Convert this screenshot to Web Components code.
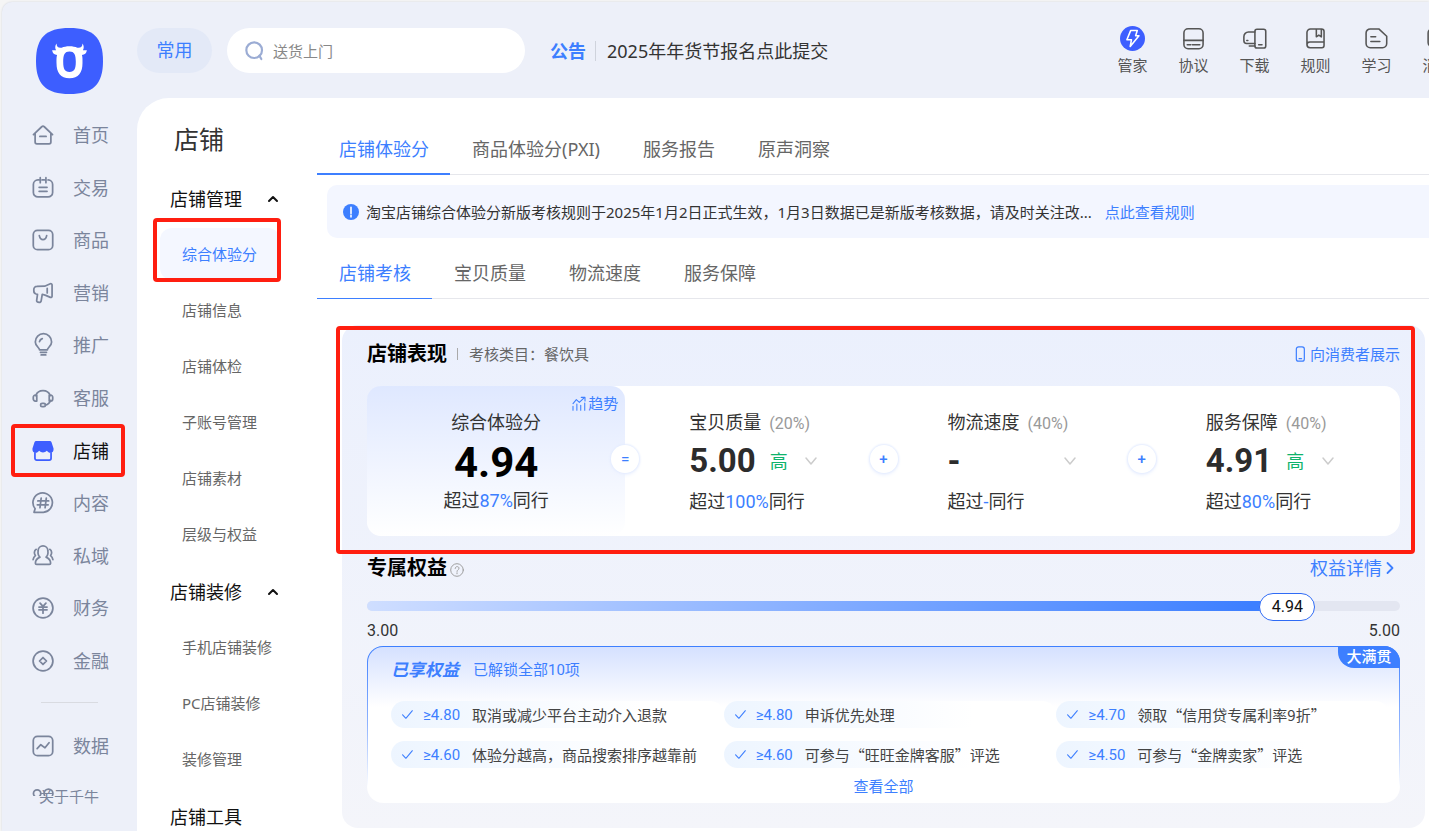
<!DOCTYPE html>
<html lang="zh-CN">
<head>
<meta charset="utf-8">
<meta name="viewport" content="width=device-width, initial-scale=1">
<title>店铺体验分</title>
<style>
  html, body { margin: 0; height: 100%; }
  body {
    --blue: #3d7fff;
    --brand: #3d5eff;
    --red: #ff1e10;
    --num: Roboto, "Noto Sans CJK SC", sans-serif;
    font: 15px/20px "Noto Sans", "Noto Sans CJK SC", sans-serif;
    color: #333;
    background: #f5f5f5;
    overflow: hidden;
  }
</style>
</head>
<body>
<app-shell>
  <side-nav slot="side"></side-nav>
  <top-bar slot="top"></top-bar>
  <sub-nav slot="sub"></sub-nav>
  <tab-bar size="large">
    <a href="#score" class="active">店铺体验分</a>
    <a href="#pxi">商品体验分(PXI)</a>
    <a href="#report">服务报告</a>
    <a href="#voice">原声洞察</a>
  </tab-bar>
  <notice-bar>淘宝店铺综合体验分新版考核规则于2025年1月2日正式生效，1月3日数据已是新版考核数据，请及时关注改...<a slot="link" href="#rules">点此查看规则</a></notice-bar>
  <tab-bar>
    <a href="#check" class="active">店铺考核</a>
    <a href="#quality">宝贝质量</a>
    <a href="#logistics">物流速度</a>
    <a href="#service">服务保障</a>
  </tab-bar>
  <score-panel></score-panel>
</app-shell>

<script>
const define = (name, css, html) => {
  const tpl = document.createElement('template');
  tpl.innerHTML = `<style>*{box-sizing:border-box}a{color:inherit;text-decoration:none}button{font:inherit;color:inherit;background:none;border:0;padding:0;cursor:pointer}h1,h2,h3,p,ul{margin:0;padding:0;font-weight:inherit;font-size:inherit}ul{list-style:none}${css}</style>${html}`;
  customElements.define(name, class extends HTMLElement {
    constructor() {
      super();
      this.attachShadow({ mode: 'open' }).append(tpl.content.cloneNode(true));
    }
  });
};

/* ---------- icons, all on a 24 unit grid ---------- */
const ICONS = {
  home: '<path d="M1.6 11.6 10.6 3Q12 1.8 13.4 3l9 8.6M3.4 10.4v9.2a2 2 0 0 0 2 2h13.2a2 2 0 0 0 2-2v-9.2M8.6 13.6h6.8"/>',
  trade: '<path d="M7.500 3.200H6.500a5 5 0 0 0-5 5v8.600a5 5 0 0 0 5 5h11a5 5 0 0 0 5-5V8.200a5 5 0 0 0-5-5M11 3.200h2.500M9 .8v5.400M15.200.8v5.400M7.800 11.300h8.600M7.800 15.600h8.600"/>',
  goods: '<rect x="1.400" y="1.400" width="21.200" height="21.200" rx="4.600"/><path d="M8 7.200c.6 3.200 2.200 4.400 4 4.400s3.400-1.200 4-4.400"/>',
  horn: '<path d="M13.800 4.600 20 1.900a1.400 1.400 0 0 1 1.900 1.300v12.300a1.400 1.400 0 0 1-1.900 1.300l-5-2.200-3.800-1.200-1.200 7.200a1.900 1.900 0 0 1-2.200 1.600l-1.200-.2a1.700 1.700 0 0 1-1.500-2l.9-6.600-1.500-.3A3.200 3.200 0 0 1 2 9.900V8a3.200 3.200 0 0 1 3.200-3.200ZM16.600 7v5"/>',
  bulb: '<path d="M8.200 17.200c0-2.200-4.600-4-4.600-8.600a8.900 8.900 0 0 1 17.800 0c0 4.600-4.600 6.400-4.600 8.600ZM9.200 20h6.600M10 22.800h5M8.200 8.300a4.600 4.600 0 0 1 3-3.300"/>',
  headset: '<path d="M4 9.500a8.600 8.600 0 0 1 16 0M20.200 14.500c-.8 3-2.600 4.600-5.600 5.300M4 8.900H3.600a2.200 2.200 0 0 0-2.200 2.200v2a2.200 2.200 0 0 0 2.200 2.200H5.200V8.900ZM20 8.900h.4a2.200 2.200 0 0 1 2.200 2.200v2a2.200 2.200 0 0 1-2.200 2.200h-1.600V8.900Z"/><rect x="9.400" y="17.800" width="5.200" height="3.600" rx="1.600"/>',
  shop: '<path d="M3.200 14v6a2 2 0 0 0 2 2h13.600a2 2 0 0 0 2-2v-6"/><path d="M4.600 1h14.800a2 2 0 0 1 1.900 1.400l2.200 6.800c.4 3-1.200 4.800-3.300 4.800-1.700 0-2.800-.8-4.100-2.200-1.200 1.200-2.500 1.800-4.100 1.800s-2.900-.6-4.100-1.800C6.600 13.200 5.500 14 3.800 14 1.700 14 .1 12.200.5 9.200l2.200-6.800A2 2 0 0 1 4.600 1Z" fill="currentColor" stroke="none"/>',
  hash: '<path d="M2.200 22.200l1.200-3.900A10.600 10.600 0 1 1 12.400 22.200ZM10 6.600 8.700 17.200M15.600 6.600l-1.300 10.600M6.400 9.800h11.800M5.800 14h11.800"/>',
  people: '<path d="M8.700 13.200C6.500 11.600 6.300 9 6.700 6.200a5.300 5.300 0 0 1 10.600 0c.4 2.800.2 5.400-2 7 3.400 1.400 5 3.600 5 6.600a1.400 1.400 0 0 1-1.400 1.400H5.100a1.400 1.400 0 0 1-1.400-1.400c0-3 1.600-5.200 5-6.600ZM4.600 4.700C2 6 2.200 9.800 3.700 11.600 2.300 12.600 1.500 14 1.200 16M19.400 4.700C22 6 21.800 9.800 20.300 11.600c1.400 1 2.200 2.400 2.500 4.400"/>',
  yen: '<circle cx="12" cy="12" r="10.800"/><path d="M8.800 6.600 12 10.200l3.200-3.600M12 10.200v7.400M7.600 11h8.800M7.600 14h8.800"/>',
  finance: '<circle cx="12" cy="12" r="10.800"/><path d="m12 8.200 3.800 3.800-3.800 3.800L8.200 12Z"/>',
  chart: '<rect x="1.400" y="1.400" width="21.200" height="21.200" rx="4.600"/><path d="m5.600 14.800 4-4.200 4.600 3.400 4.400-5.600"/>',
  apps: '<circle cx="5.600" cy="6" r="4"/><circle cx="18" cy="6" r="4.800"/><circle cx="6" cy="18" r="4.200"/><circle cx="18" cy="18" r="4.200"/>',
  search: '<circle cx="11" cy="11" r="9.400"/><path d="m17.200 17.600 2.400 4"/>',
  bolt: '<circle cx="12" cy="12" r="12" fill="#3d5eff" stroke="none"/><path stroke="#fff" d="M10.200 4.400h6.400l-1.600 5h3.200L9.800 19.600l1.200-6.400H6.600Z"/>',
  agreement: '<rect x="2.800" y="2.600" width="18.400" height="19.200" rx="4"/><path d="M2.800 13.800h18.400M6 18h3.400M11 18h7"/>',
  download: '<rect x="12.400" y="3.200" width="10.400" height="18" rx="2"/><path d="M12.400 5.800H6.200A4.400 4.400 0 0 0 1.800 10.200v4a2.600 2.600 0 0 0 2.600 2.600h8M7 19.200h5.400M16 18h3.200M4.600 14h1"/>',
  rules: '<path d="M20.200 15.400V5.200a2.400 2.400 0 0 0-2.400-2.400H7.200a3.400 3.400 0 0 0-3.400 3.400v11.600a3 3 0 0 0 3 3h11.400a2 2 0 0 0 2-2v-3.400H6.600a2.800 2.800 0 0 0-2.800 2.600M12.800 3v7.400l2.400-1.600 2.400 1.600V3"/>',
  study: '<path d="M6 2.800h8.200L21.800 9.800v7a4 4 0 0 1-4 4H6a4 4 0 0 1-4-4v-10a4 4 0 0 1 4-4ZM6.600 10.400h4.600M6.600 14.800h8.600"/>',
  message: '<rect x="3" y="2.800" width="19" height="17" rx="4"/><path d="M7 11h10"/>',
  phone: '<rect x="6.500" y="1.200" width="12" height="21.600" rx="3.400"/><path d="M10.600 19h3.800"/>',
  trend: '<path d="M3 13l5-6 4.500 4L20 4M15.400 3.600H21v5.400M3 17v6M8.800 13.500V23M14.600 15.500V23M20.600 12V23"/>',
  help: '<circle cx="12" cy="12" r="10.800"/><path d="M8.800 9.400c0-4.400 6.600-4.200 6.600-.4 0 2.600-3.400 2.600-3.400 5.400M12 16.800v1.600"/>',
  info: '<circle cx="12" cy="12" r="12" fill="#3d7fff" stroke="none"/><path stroke="#fff" stroke-width="2.400" d="M12 5v9.400M12 17v2.400"/>',
  check: '<path d="m3 12.500 6 6.500L21 5"/>',
  up: '<path d="m4 16 8-8 8 8"/>',
  down: '<path d="m2 6 10 12L22 6"/>',
  right: '<path d="m7 2 10 10L7 22"/>'
};
customElements.define('ui-icon', class extends HTMLElement {
  connectedCallback() {
    if (this.shadowRoot) return;
    const w = this.getAttribute('weight') || '1.6';
    this.attachShadow({ mode: 'open' }).innerHTML =
      `<style>:host{display:block;flex:none;width:22px;height:22px}svg{display:block;width:100%;height:100%;overflow:visible}</style>
       <svg viewBox="0 0 24 24" fill="none" stroke="currentColor" stroke-width="${w}" stroke-linecap="round" stroke-linejoin="round" aria-hidden="true">${ICONS[this.getAttribute('name')]}</svg>`;
  }
});

/* outline drawn round a region to call attention to it */
define('mark-frame', `
  :host{position:absolute;border:4px solid var(--red);border-radius:4px;pointer-events:none;z-index:5;box-sizing:border-box}
`, '');

define('app-shell', `
  :host{display:block;height:100vh;padding:2px 0 0 2px;box-sizing:border-box;overflow:hidden}
  .frame{display:grid;grid-template:96px minmax(0,1fr)/135px minmax(0,1fr);height:100%;background:#edf0f9;border-radius:10px 0 0 0;box-shadow:0 0 2px #cfd2da}
  .side{grid-row:1/3;min-height:0}
  main{display:grid;grid-template-columns:180px minmax(0,1fr);background:#fff;border-radius:32px 0 0 0;overflow:hidden}
  .content{min-width:0;padding-top:28px}
`, `
  <div class="frame">
    <div class="side"><slot name="side"></slot></div>
    <slot name="top"></slot>
    <main><slot name="sub"></slot><div class="content"><slot></slot></div></main>
  </div>`);

const navItem = (icon, label, extra = '', mark = '') =>
  `<li ${extra}><a href="#${icon}"><ui-icon name="${icon}" weight="1.9"></ui-icon>${label}</a>${mark}</li>`;

define('side-nav', `
  :host{display:flex;flex-direction:column;height:100%}
  .logo{flex:none;width:67px;height:66px;margin:26px 0 15px 34px}
  .logo svg{display:block;width:100%;height:100%}
  nav{flex:1;min-height:0;overflow:hidden}
  ul{display:grid;grid-auto-rows:1fr}
  .primary{height:578px}
  .extra{height:106px}
  hr{width:57px;height:1px;margin:15px 0 16px 39px;border:0;background:#d9dbe1}
  li{position:relative;display:flex;color:#7b859c}
  li.active{color:#111}
  li.active ui-icon{color:var(--brand)}
  li a{display:flex;flex:1;align-items:center;gap:19px;padding-left:30px;font-size:18px;line-height:24px}
  mark-frame{inset:0 12px 0 9px}
  footer{display:flex;height:41px;margin-top:-6px;padding-left:37px;position:relative;color:#7b859c}
  footer a{display:flex;align-items:flex-end;height:15px;overflow:hidden;line-height:18px}
`, `
  <a class="logo" href="#home" aria-label="千牛"><svg viewBox="0 0 67 66">
    <path fill="#3d5eff" d="M33.500 0C57 0 67 9.500 67 33S57 66 33.500 66 0 56.500 0 33 10 0 33.500 0Z"/>
    <path fill="#fff" fill-rule="evenodd" d="M20.500 15.500c.2 3 1.300 4.200 4 4.200h1.200c2-1 4.600-1.500 7.800-1.500s5.800.5 7.800 1.500h1.200c2.700 0 3.800-1.200 4-4.200 1.600 2.300 1.600 4.700.4 6.800h4c-.5 3-2.200 4.600-5 4.600.8 2.300.6 5 .6 8.100 0 9.800-4 15.200-13 15.200S20.500 44.800 20.500 35c0-3.100-.2-5.800.6-8.100-2.800 0-4.500-1.600-5-4.600h4c-1.200-2.100-1.200-4.500.4-6.800ZM33.500 23.400c-4.900 0-6.300 3.200-6.300 10.400 0 6.800 1.400 10.200 6.300 10.200s6.300-3.400 6.300-10.200c0-7.200-1.400-10.400-6.300-10.400Z"/>
  </svg></a>
  <nav aria-label="主导航">
    <ul class="primary">
      ${navItem('home', '首页')}${navItem('trade', '交易')}${navItem('goods', '商品')}${navItem('horn', '营销')}
      ${navItem('bulb', '推广')}${navItem('headset', '客服')}
      ${navItem('shop', '店铺', 'class="active"', '<mark-frame></mark-frame>')}
      ${navItem('hash', '内容')}${navItem('people', '私域')}${navItem('yen', '财务')}${navItem('finance', '金融')}
    </ul>
    <hr>
    <ul class="extra">${navItem('chart', '数据')}${navItem('apps', '')}</ul>
  </nav>
  <footer><a href="#about">关于千牛</a></footer>`);

define('tool-link', `
  :host{display:block;flex:none;width:61px}
  a{display:flex;flex-direction:column;align-items:center;gap:4px;line-height:20px;color:#555}
  ::slotted(ui-icon){width:25px;height:25px}
`, `<a href="#"><slot name="icon"></slot><span><slot></slot></span></a>`);

const tool = (icon, label) => `<tool-link><ui-icon slot="icon" name="${icon}" weight="1.500"></ui-icon>${label}</tool-link>`;
define('top-bar', `
  :host{display:flex;align-items:flex-start;padding-top:24px;min-width:0;overflow:hidden}
  .pill{flex:none;width:75px;height:45px;margin-top:2px;padding-bottom:2px;border-radius:23px;background:#e3e9f7;color:var(--blue);font-size:18px}
  .search{display:flex;align-items:center;gap:8px;flex:none;width:298px;height:45px;margin:2px 0 0 15px;padding:0 18px;border-radius:23px;background:#fff;color:#9bacd4}
  .search ui-icon{width:20px;height:20px}
  input{flex:1;min-width:0;border:0;outline:0;background:none;font:inherit;color:#333;padding:0}
  input::placeholder{color:#888;opacity:1}
  .news{display:flex;align-items:center;flex:1;min-width:0;height:45px;margin:2px 0 0 25px;font-size:18px;white-space:nowrap}
  .news b{color:var(--blue);padding-right:9px}
  .news a{border-left:1px solid #cfd3dc;padding-left:11px}
  .tools{display:flex;margin-right:-39px}
`, `
  <button class="pill">常用</button>
  <label class="search"><ui-icon name="search" weight="2.600"></ui-icon><input type="text" placeholder="送货上门" aria-label="搜索"></label>
  <div class="news"><b>公告</b><a href="#news">2025年年货节报名点此提交</a></div>
  <div class="tools">${tool('bolt', '管家')}${tool('agreement', '协议')}${tool('download', '下载')}${tool('rules', '规则')}${tool('study', '学习')}${tool('message', '消息')}</div>`);

define('nav-group', `
  :host{display:block;margin-bottom:3px}
  button{display:flex;align-items:center;gap:25px;height:54px;padding-left:33px;font-size:18px;color:#111}
  ui-icon{width:12px;height:12px}
  :host([plain]) ui-icon{display:none}
`, `<button aria-expanded="true"><slot name="title"></slot><ui-icon name="up" weight="4"></ui-icon></button><slot></slot>`);

define('sub-nav', `
  :host{display:block;padding-top:24px}
  h1{font-size:25px;line-height:34px;padding-left:37px;margin-bottom:16px}
  a{display:flex;align-items:center;height:56px;padding-left:45px;color:#666}
  a.active{position:relative;height:52px;margin:2px 37px 2px 23px;padding-left:22px;border-radius:12px;background:#f4f7ff;color:var(--blue)}
  mark-frame{inset:-10px -1px -2px -7px}
`, `
  <h1>店铺</h1>
  <nav aria-label="店铺">
    <nav-group><span slot="title">店铺管理</span>
      <a class="active" href="#a">综合体验分<mark-frame></mark-frame></a><a href="#b">店铺信息</a><a href="#c">店铺体检</a><a href="#d">子账号管理</a><a href="#e">店铺素材</a><a href="#f">层级与权益</a></nav-group>
    <nav-group><span slot="title">店铺装修</span>
      <a href="#g">手机店铺装修</a><a href="#h">PC店铺装修</a><a href="#i">装修管理</a></nav-group>
    <nav-group plain><span slot="title">店铺工具</span></nav-group>
  </nav>`);

define('tab-bar', `
  :host{display:block}
  nav{display:flex;border-bottom:1px solid #e6e7ec}
  ::slotted(a){position:relative;padding:11px 21px 12px 22px;margin-bottom:-1px;border-bottom:1px solid transparent;font-size:18px;line-height:25px;color:#666;text-decoration:none;white-space:nowrap}
  :host([size=large]) ::slotted(a){padding-bottom:11px;border-bottom-width:2px}
  ::slotted(a.active){color:var(--blue);border-bottom-color:var(--blue)}
`, `<nav><slot></slot></nav>`);

define('notice-bar', `
  :host{display:flex;align-items:center;height:53px;margin:10px 0 12px 10px;padding-left:16px;background:#f3f6ff;border-radius:10px 0 0 10px;white-space:nowrap;overflow:hidden;box-sizing:border-box}
  ui-icon{width:16px;height:16px;margin-right:7px}
  ::slotted(a){margin-left:13px;color:var(--blue);text-decoration:none}
`, `<ui-icon name="info"></ui-icon><span><slot></slot></span><slot name="link"></slot>`);

define('score-cell', `
  :host{display:flex;flex-direction:column;position:relative;padding:24px 0 0 64px;font-size:18px;line-height:25px;white-space:nowrap}
  .weight{margin-left:8px;font:16px/25px var(--num);color:#999}
  .value{display:flex;align-items:center;width:128px;height:40px;margin:5px 0 8px;font-size:18px;color:#0fb36c}
  .num{font:bold 33px/40px var(--num);color:#2c2c2c;margin-right:14px}
  .value ui-icon{width:12px;height:12px;margin-left:auto;color:#ccc}
  .op{position:absolute;left:-14px;top:59px;width:28px;height:28px;border-radius:50%;background:#fff;box-shadow:0 0 2px 1px #e4ecff,0 2px 4px #edf2ff;color:var(--blue);font:500 15px/28px var(--num);text-align:center}
  .beat{font-family:var(--num)}
  :host([total]){align-items:center;padding-left:0;border-radius:14px;background:linear-gradient(#dfe8ff,#fff)}
  :host([total]) .value{width:auto;margin:8px 0 5px}
  :host([total]) .num{font-size:42px;color:#000;margin:0}
  :host([total]) :is(.op,.value ui-icon,.weight){display:none}
`, `
  <div><slot name="title"></slot><span class="weight"><slot name="weight"></slot></span></div>
  <div class="value"><span class="num"><slot name="num"></slot></span><slot name="level"></slot><ui-icon name="down" weight="3"></ui-icon></div>
  <div class="beat"><slot></slot></div>
  <span class="op"><slot name="op"></slot></span>
  <slot name="corner"></slot>`);

define('benefit-item', `
  :host{display:flex;align-items:center;height:27px;padding-left:10px;border-radius:14px;background:linear-gradient(90deg,#edf5ff,#fff 75%);font-family:"Noto Sans CJK SC",sans-serif;color:#444;white-space:nowrap}
  ui-icon{width:13px;height:13px;color:var(--blue)}
  .min{width:49px;margin-left:9px;font-family:var(--num);color:var(--blue)}
`, `<ui-icon name="check" weight="2"></ui-icon><span class="min"><slot name="min"></slot></span><slot></slot>`);

const benefit = (min, text) => `<benefit-item role="listitem"><span slot="min">≥${min}</span>${text}</benefit-item>`;
const cell = (op, title, weight, num, level, beat) => `
  <score-cell><span slot="title">${title}</span><span slot="weight">(${weight})</span><span slot="num">${num}</span><span slot="level">${level}</span>超过<em>${beat}</em>同行<span slot="op">${op}</span></score-cell>`;

define('score-panel', `
  :host{display:block;position:relative;margin:26px 4px 0 25px;padding:16px 25px 25px;border-radius:16px;background:linear-gradient(#ebf0fd,#f4f5fa)}
  .frame{inset:1px 10px auto -6px;height:228px}
  em{font-style:normal;color:var(--blue)}
  header{display:flex;align-items:center;height:26px}
  h2{font-size:20px;line-height:26px;font-weight:bold;color:#000}
  .cat{margin-left:10px;color:#666;display:flex;align-items:center}
  .cat::before{content:"";width:1px;height:12px;margin-right:11px;background:#aaa}
  header a{display:flex;align-items:center;margin-left:auto;color:var(--blue)}
  header a.show ui-icon{width:16px;height:16px;margin-right:2px}
  .scores{display:grid;grid-template-columns:repeat(4,minmax(0,1fr));height:150px;margin:19px 0;border-radius:16px;background:#fff}
  .trend{position:absolute;right:7px;top:7px;display:flex;align-items:center;font-size:15px;line-height:20px;color:var(--blue)}
  .trend ui-icon{width:16px;height:16px;margin-right:1px}
  .help{width:14px;height:14px;margin:4px 0 0 3px;color:#999}
  header a.detail{font-size:18px;line-height:24px;gap:2px;padding-right:4px}
  .detail ui-icon{width:12px;height:12px}
  .track{position:relative;height:10px;margin:20px 0 10px;border-radius:5px;background:#e3e6f1}
  .fill{width:89%;height:10px;border-radius:5px;background:linear-gradient(90deg,#cfdeff,#3d7fff 96%)}
  .thumb{position:absolute;left:89%;top:-8px;width:56px;height:28px;margin-left:-27px;border:1px solid #2f6bf5;border-radius:14px;background:#fff;font:16px/26px var(--num);text-align:center;color:#111}
  .range{display:flex;justify-content:space-between;font:16px/20px var(--num);margin-bottom:5px}
  .box{position:relative;height:157px;padding-top:13px;border:1px solid transparent;border-radius:16px;
    background:linear-gradient(#d5e1ff,#fff 60px) padding-box,linear-gradient(#3d7fff,#8fb3ff 50%,#fff 90%) border-box}
  .badge{position:absolute;right:-1px;top:-1px;width:62px;height:22px;border-radius:0 16px 0 16px;background:var(--blue);color:#fff;font-weight:500;text-align:center;line-height:20px}
  .title{display:flex;align-items:center;height:20px;padding-left:23px;color:var(--blue)}
  h3{font-size:17px;font-weight:bold;font-style:italic;margin-right:14px}
  .title span{font-family:var(--num)}
  .list{display:grid;grid-template-columns:repeat(3,minmax(0,1fr));gap:13px 0;margin-top:21px;padding:0 10px 0 23px}
  .all{display:block;margin:8px auto 0;color:var(--blue);line-height:20px}
`, `
  <mark-frame class="frame"></mark-frame>
  <header>
    <h2>店铺表现</h2><span class="cat">考核类目：餐饮具</span>
    <a class="show" href="#show"><ui-icon name="phone" weight="1.800"></ui-icon>向消费者展示</a>
  </header>
  <div class="scores">
    <score-cell total><span slot="title">综合体验分</span><span slot="num">4.94</span>超过<em>87%</em>同行
      <a class="trend" slot="corner" href="#trend"><ui-icon name="trend" weight="1.600"></ui-icon>趋势</a></score-cell>
    ${cell('=', '宝贝质量', '20%', '5.00', '高', '100%')}
    ${cell('+', '物流速度', '40%', '-', '', '-')}
    ${cell('+', '服务保障', '40%', '4.91', '高', '80%')}
  </div>
  <header>
    <h2>专属权益</h2><ui-icon class="help" name="help"></ui-icon>
    <a class="detail" href="#detail">权益详情<ui-icon name="right" weight="3.600"></ui-icon></a>
  </header>
  <div class="track" role="meter" aria-label="综合体验分" aria-valuemin="3" aria-valuemax="5" aria-valuenow="4.94"><div class="fill"></div><span class="thumb">4.94</span></div>
  <div class="range"><span>3.00</span><span>5.00</span></div>
  <section class="box">
    <span class="badge">大满贯</span>
    <div class="title"><h3>已享权益</h3><span>已解锁全部10项</span></div>
    <div class="list" role="list">
      ${benefit('4.80', '取消或减少平台主动介入退款')}${benefit('4.80', '申诉优先处理')}${benefit('4.70', '领取“信用贷专属利率9折”')}
      ${benefit('4.60', '体验分越高，商品搜索排序越靠前')}${benefit('4.60', '可参与“旺旺金牌客服”评选')}${benefit('4.50', '可参与“金牌卖家”评选')}
    </div>
    <button class="all">查看全部</button>
  </section>`);
</script>
</body>
</html>
